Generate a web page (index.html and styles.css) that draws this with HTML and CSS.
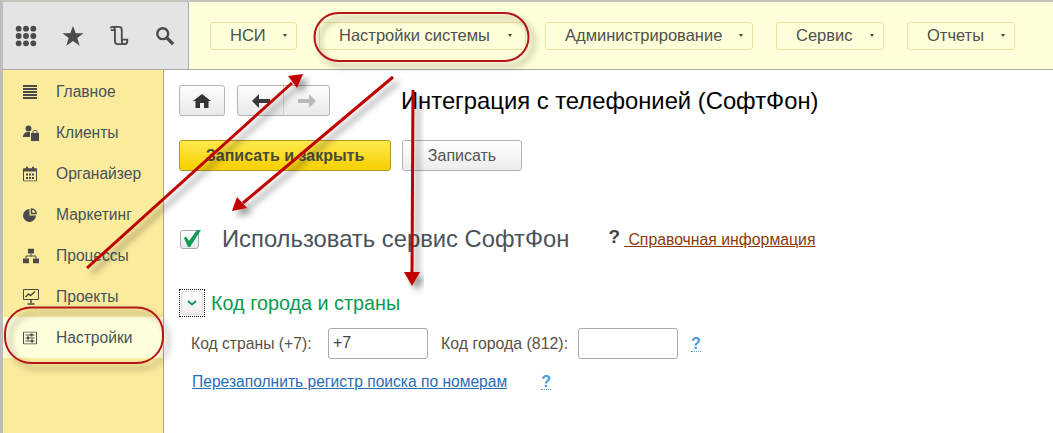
FILE: index.html
```html
<!DOCTYPE html>
<html lang="ru">
<head>
<meta charset="utf-8">
<title>Интеграция с телефонией</title>
<link rel="stylesheet" href="styles.css">
</head>
<body>
<div class="app">
  <header class="topbar">
    <div class="tools">
      <svg class="tool" width="22" height="22" viewBox="0 0 24 24"><g fill="#4a4a4a"><circle cx="4" cy="4" r="3.200"/><circle cx="12" cy="4" r="3.200"/><circle cx="20" cy="4" r="3.200"/><circle cx="4" cy="12" r="3.200"/><circle cx="12" cy="12" r="3.200"/><circle cx="20" cy="12" r="3.200"/><circle cx="4" cy="20" r="3.200"/><circle cx="12" cy="20" r="3.200"/><circle cx="20" cy="20" r="3.200"/></g></svg>
      <svg class="tool" width="22" height="22" viewBox="0 0 24 24"><path fill="#4a4a4a" d="M12 1l3 8h8.500l-6.800 5.200 2.600 8.300L12 17.500l-7.300 5 2.600-8.300L.5 9H9z"/></svg>
      <svg class="tool" width="21" height="20" viewBox="0 0 21 22"><path fill="none" stroke="#4a4a4a" stroke-width="2" d="M1 2.500c0-1 .8-1.500 2-1.500h7c2 0 3 1 3 3v12c0 2 1 4 3 4s3-1.500 3-3v-2h-6M3 1c2 0 2.500 2 2.500 3.500H1M5.500 4v12c0 2 1 4 3 4H16"/></svg>
      <svg class="tool" width="20" height="20" viewBox="0 0 22 22"><circle cx="8.500" cy="8.500" r="6" fill="none" stroke="#4a4a4a" stroke-width="2.600"/><path stroke="#4a4a4a" stroke-width="3.600" d="M13 13l7 7"/></svg>
    </div>
    <nav class="menu">
      <a class="menu-btn w-nsi">НСИ<span class="caret"></span></a>
      <a class="menu-btn w-set">Настройки системы<span class="caret"></span></a>
      <a class="menu-btn w-adm">Администрирование<span class="caret"></span></a>
      <a class="menu-btn w-srv">Сервис<span class="caret"></span></a>
      <a class="menu-btn w-rep">Отчеты<span class="caret"></span></a>
    </nav>
  </header>
  <div class="body">
    <aside class="side">
      <div class="side-item">
        <svg width="14" height="14" viewBox="0 0 14 14"><path stroke="#4a4a4a" stroke-width="2" d="M0 1h14M0 4h14M0 7h14M0 10h14M0 13h14"/></svg>
        <span>Главное</span>
      </div>
      <div class="side-item">
        <svg width="16" height="16" viewBox="0 0 16 16"><g fill="#4a4a4a"><circle cx="5.500" cy="3.500" r="3"/><path d="M0 12c0-3 2-5 5-5h2v5z"/><path d="M8 8h8v8H8z"/></g><path fill="none" stroke="#4a4a4a" d="M10 8V6.500c0-1.500 4-1.500 4 0V8"/></svg>
        <span>Клиенты</span>
      </div>
      <div class="side-item">
        <svg width="14" height="15" viewBox="0 0 14 15"><path fill="none" stroke="#4a4a4a" d="M.5 2.500h13v12H.5z"/><path fill="#4a4a4a" d="M0 2h14v3H0zM3 0h2v3H3zM9 0h2v3H9zM3 7h2v2H3zM6 7h2v2H6zM9 7h2v2H9zM3 10.500h2v2H3zM6 10.500h2v2H6zM9 10.500h2v2H9z"/></svg>
        <span>Органайзер</span>
      </div>
      <div class="side-item">
        <svg width="14" height="14" viewBox="0 0 14 14"><path fill="#4a4a4a" d="M6.500 1v6.500H13A6.500 6.500 0 1 1 6.500 1z"/><path fill="none" stroke="#4a4a4a" stroke-width="1.500" d="M8.500 1a4.500 4.500 0 0 1 4.500 4.500H8.500z"/></svg>
        <span>Маркетинг</span>
      </div>
      <div class="side-item">
        <svg width="16" height="15" viewBox="0 0 16 15"><path fill="#4a4a4a" d="M5 0h6v5H5zM0 10h6v5H0zM10 10h6v5h-6z"/><path fill="none" stroke="#4a4a4a" d="M8 5v3M3 10V7.500h10V10"/></svg>
        <span>Процессы</span>
      </div>
      <div class="side-item">
        <svg width="16" height="16" viewBox="0 0 16 16"><path fill="none" stroke="#4a4a4a" d="M.5.500h15v10H.5z"/><path fill="none" stroke="#4a4a4a" stroke-width="1.500" d="M2.500 8l3-3 2 1.500L12 2.500M8 11v3M4.500 15h7"/></svg>
        <span>Проекты</span>
      </div>
      <div class="side-item active">
        <svg width="14" height="13" viewBox="0 0 14 13"><path fill="none" stroke="#4a4a4a" d="M.5.500h13v12H.5z"/><path fill="none" stroke="#4a4a4a" d="M2.500 3.500h9M2.500 6.500h9M2.500 9.500h9"/><path fill="#4a4a4a" d="M7.500 2h2v3h-2zM4 5h2v3H4zM8 8h2v3H8z"/></svg>
        <span>Настройки</span>
      </div>
    </aside>
    <main class="main">
      <div class="head-row">
        <button class="btn home"><svg width="18" height="14" viewBox="0 0 18 14"><path fill="#333" d="M9 0l9 7h-2.500v7H11V9H7v5H2.500V7H0z"/></svg></button>
        <div class="btn nav">
          <span class="nav-cell"><svg width="18" height="14" viewBox="0 0 18 14"><path fill="#3a3a3a" d="M7 0v5h11v4H7v5L0 7z"/></svg></span>
          <span class="nav-cell"><svg width="18" height="14" viewBox="0 0 18 14"><path fill="#b9b9b9" d="M11 0v5H0v4h11v5l7-7z"/></svg></span>
        </div>
        <h1 class="title">Интеграция с телефонией (СофтФон)</h1>
      </div>
      <div class="cmd-row">
        <button class="btn primary">Записать и закрыть</button>
        <button class="btn secondary">Записать</button>
      </div>
      <div class="check-row">
        <span class="check"><svg width="22" height="22" viewBox="0 0 22 22"><path fill="#0e9c55" d="M4 10l2-1.500 3 4.500L17 2h4L10 19H8z"/></svg></span>
        <span class="check-label">Использовать сервис СофтФон</span>
        <span class="q-dark">?</span>
        <a class="ref-link">&nbsp;Справочная информация</a>
      </div>
      <div class="group-row">
        <span class="focus"><span class="toggle"><svg width="10" height="6" viewBox="0 0 10 6"><path fill="none" stroke="#0e9c55" stroke-width="2" d="M1 1l4 3.500L9 1"/></svg></span></span>
        <h2 class="group-title">Код города и страны</h2>
      </div>
      <div class="field-row">
        <label class="lbl-a">Код страны (+7):</label>
        <span class="input">+7</span>
        <label class="lbl-b">Код города (812):</label>
        <span class="input"></span>
        <a class="q-blue">?</a>
      </div>
      <div class="link-row">
        <a class="blue-link">Перезаполнить регистр поиска по номерам</a>
        <a class="q-blue">?</a>
      </div>
    </main>
  </div>
  <svg class="notes" width="1053" height="433" viewBox="0 0 1053 433">
    <defs>
      <filter id="sh" x="-20%" y="-20%" width="140%" height="140%"><feDropShadow dx="5" dy="5" stdDeviation="3" flood-color="#000" flood-opacity=".42"/></filter>
    </defs>
    <g filter="url(#sh)">
      <rect x="314.500" y="13" width="214" height="48" rx="24" fill="none" stroke="#b5121b" stroke-width="2"/>
      <rect x="5" y="307.500" width="158" height="55.500" rx="26" fill="none" stroke="#b5121b" stroke-width="2"/>
    </g>
    <g filter="url(#sh)">
      <path stroke="#c00000" stroke-width="3" d="M87 268L292 83"/>
      <path fill="#c00000" d="M303 74L288 76 297 88z"/>
    </g>
    <g filter="url(#sh)">
      <path stroke="#c00000" stroke-width="3" d="M393 77L243 203"/>
      <path fill="#c00000" d="M232 211L237 197 247 208z"/>
    </g>
    <g filter="url(#sh)">
      <path stroke="#c00000" stroke-width="3" d="M413 90L412 274"/>
      <path fill="#c00000" d="M412 286L404 272H420z"/>
    </g>
  </svg>
</div>
</body>
</html>
```
FILE: styles.css
```css
* { box-sizing: border-box; }
html, body { margin: 0; padding: 0; }
body { font-family: "Liberation Sans", Arial, sans-serif; background: #fff; overflow: hidden; }
.app { position: relative; width: 1053px; height: 433px; display: flex; flex-direction: column; border-top: 2px solid #c4c4be; border-left: 3px solid #bdbdbd; }
.topbar { display: flex; height: 68px; flex: none; border-bottom: 1px solid #a9a9a2; background: #ffffd9; }
.tools { width: 186px; flex: none; display: flex; align-items: center; background: #e4e4e4; border-right: 1px solid #a9a9a9; padding-left: 12px; }
.tool { margin-right: 25px; flex: none; }
.menu { display: flex; align-items: center; }
.menu-btn { display: flex; align-items: center; justify-content: space-between; height: 28px; border: 1px solid #ebe19b; border-radius: 3px; background: #ffffd9; color: #4f4f4f; font-size: 16.500px; padding: 0 9px 0 19px; white-space: nowrap; }
.w-nsi { width: 87px; margin-left: 21px; }
.w-set { width: 207px; margin-left: 22px; padding-right: 13px; }
.w-adm { width: 208px; margin-left: 19px; }
.w-srv { width: 108px; margin-left: 23px; }
.w-rep { width: 108px; margin-left: 23px; }
.caret { width: 0; height: 0; border: 2.500px solid transparent; border-top: 3px solid #444; border-bottom: 0; }
.body { display: flex; flex: 1; min-height: 0; }
.side { width: 161px; flex: none; background: #fbeb9c; border-right: 1px solid #bfae45; padding-top: 1px; }
.side-item { height: 41px; display: flex; align-items: center; color: #45525a; font-size: 15.600px; position: relative; padding-left: 53px; }
.side-item svg { position: absolute; left: 20px; top: 50%; transform: translateY(-50%); }
.side-item.active { background: #ffffdc; }
.main { flex: 1; padding: 15px 0 0 15px; color: #4b4b4b; }
.head-row { display: flex; align-items: center; height: 31px; }
.btn { border: 1px solid #b4b4b4; border-radius: 3px; background: linear-gradient(#fdfdfd, #e9e9e9); padding: 0; font-family: inherit; }
.home { width: 46px; height: 31px; display: flex; align-items: center; justify-content: center; }
.nav { width: 93px; height: 31px; margin-left: 12px; display: flex; }
.nav-cell { flex: 1; display: flex; align-items: center; justify-content: center; }
.nav-cell + .nav-cell { border-left: 1px solid #cdcdcd; }
.title { margin: 0 0 0 71px; font-size: 23.800px; font-weight: 400; color: #000; line-height: 30px; white-space: nowrap; }
.cmd-row { display: flex; margin-top: 24px; }
.primary { width: 212px; height: 31px; background: linear-gradient(#ffe94d, #f6d000); border-color: #b09a20; font-size: 16px; font-weight: 700; color: #4a4a38; }
.secondary { width: 120px; height: 31px; margin-left: 11px; background: linear-gradient(#fff, #ededed); font-size: 16px; color: #555; }
.check-row { display: flex; align-items: center; margin-top: 53px; height: 30px; padding-left: 1px; }
.check { width: 19px; height: 19px; border: 1px solid #aaa; border-radius: 3px; background: linear-gradient(#fff, #e8e8e8); position: relative; flex: none; }
.check svg { position: absolute; left: -1px; top: -3px; }
.check-label { margin-left: 23px; font-size: 23.800px; color: #4b525a; white-space: nowrap; }
.q-dark { margin-left: 39px; font-size: 19px; font-weight: 700; color: #444; position: relative; top: -2px; }
.ref-link { margin-left: 4px; font-size: 15.800px; color: #8a3b0d; text-decoration: underline; white-space: nowrap; position: relative; top: 1px; }
.group-row { display: flex; align-items: center; margin-top: 35px; height: 28px; }
.focus { width: 26px; height: 28px; border: 1px dotted #111; display: flex; align-items: center; justify-content: center; flex: none; }
.toggle { width: 22px; height: 24px; border: 1px solid #dcdcdc; border-radius: 3px; background: linear-gradient(#fff, #eee); display: flex; align-items: center; justify-content: center; }
.group-title { margin: 0 0 0 6px; font-size: 19.800px; font-weight: 400; color: #0a9a50; white-space: nowrap; }
.field-row { display: flex; align-items: center; margin-top: 11px; height: 31px; padding-left: 12px; font-size: 15.700px; color: #5a5048; white-space: nowrap; }
.lbl-a { width: 137px; }
.lbl-b { width: 137px; margin-left: 13px; font-size: 15.900px; }
.input { width: 100px; height: 31px; border: 1px solid #a9a9a9; border-radius: 3px; background: #fff; padding: 0 4px; line-height: 27px; font-size: 16px; color: #444; }
.q-blue { font-size: 16px; font-weight: 700; color: #4c9bd3; border-bottom: 1px dotted #4c9bd3; line-height: 15px; margin-left: 13px; }
.link-row { display: flex; align-items: center; margin-top: 14px; padding-left: 13px; font-size: 15.600px; white-space: nowrap; }
.blue-link { color: #2a6db5; text-decoration: underline; }
.link-row .q-blue { margin-left: 34px; }
.notes { position: absolute; left: -3px; top: -2px; pointer-events: none; }
```
